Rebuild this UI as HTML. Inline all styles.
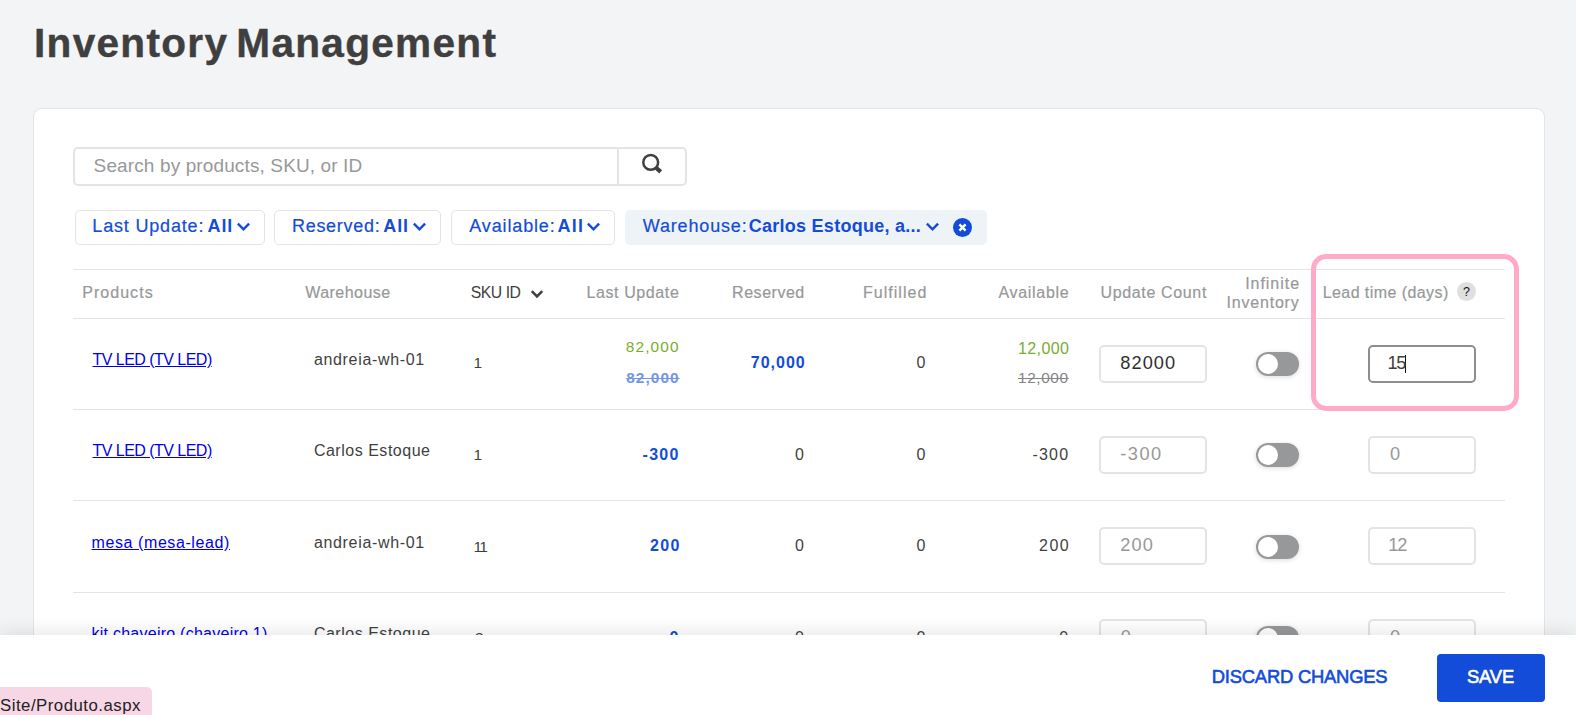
<!DOCTYPE html>
<html lang="en">
<head>
<meta charset="utf-8">
<title>Inventory Management</title>
<style>
*{box-sizing:border-box;margin:0;padding:0}
html,body{width:1576px;height:715px;overflow:hidden;background:#f2f4f5;font-family:"Liberation Sans",sans-serif;color:#3f3f40}
.abs,.t{position:absolute;white-space:nowrap}
.t{line-height:20px;font-size:16px;font-weight:400}
#card{position:absolute;left:33px;top:108px;width:1512px;height:640px;background:#fff;border:1px solid #e3e4e6;border-radius:9px}
.hl{position:absolute;height:1px;left:73px;width:1432px;background:#e3e4e6}
.box{position:absolute;border:2px solid #e3e4e6;border-radius:5px;background:#fff}
.fbtn{position:absolute;top:210px;height:35px;border:1px solid #e3e4e6;border-radius:5px;background:#fff}
.tog{position:absolute;width:43px;height:24px;border-radius:12px;background:#979899;box-shadow:0 1px 5px rgba(0,0,0,.15)}
.tog i{position:absolute;left:2px;top:2px;width:20px;height:20px;border-radius:50%;background:#fff}
.chev{position:absolute;fill:none;stroke:#134cd8;stroke-width:2.5;stroke-linecap:butt;stroke-linejoin:miter}
</style>
</head>
<body>
<div id="card"></div>

<!-- search -->
<div class="box" style="left:73px;top:147px;width:614px;height:39px"></div>
<div class="abs" style="left:617px;top:149px;width:2px;height:35px;background:#e3e4e6"></div>
<svg class="abs" style="left:638px;top:150px" width="28" height="28" viewBox="0 0 28 28" fill="none" stroke="#3f3f40"><circle cx="12.7" cy="12.4" r="7.400" stroke-width="2.500"/><path d="M18.100 17.700L22.700 21.900" stroke-width="4.200"/></svg>

<!-- filters -->
<div class="fbtn" style="left:75px;width:190px"></div>
<svg class="chev" style="left:236px;top:221px" width="15" height="12" viewBox="0 0 15 12"><path d="M1.900 2.700l5.600 5.600l5.600-5.600"/></svg>
<div class="fbtn" style="left:274px;width:167px"></div>
<svg class="chev" style="left:412px;top:221px" width="15" height="12" viewBox="0 0 15 12"><path d="M1.900 2.700l5.600 5.600l5.600-5.600"/></svg>
<div class="fbtn" style="left:451px;width:164px"></div>
<svg class="chev" style="left:586px;top:221px" width="15" height="12" viewBox="0 0 15 12"><path d="M1.900 2.700l5.600 5.600l5.600-5.600"/></svg>
<div class="abs" style="left:625px;top:210px;width:362px;height:35px;border-radius:5px;background:#eef3f8"></div>
<svg class="chev" style="left:925px;top:221px" width="15" height="12" viewBox="0 0 15 12"><path d="M1.900 2.700l5.600 5.600l5.600-5.600"/></svg>
<svg class="abs" style="left:952.500px;top:218px" width="19" height="19" viewBox="0 0 19 19"><circle cx="9.5" cy="9.5" r="9.5" fill="#134cd8"/><path d="M6.400 6.400l6.200 6.200M12.600 6.400l-6.200 6.200" stroke="#fff" stroke-width="2.400"/></svg>

<!-- table lines -->
<div class="hl" style="top:269px"></div>
<div class="hl" style="top:318px"></div>
<div class="hl" style="top:409px"></div>
<div class="hl" style="top:500px"></div>
<div class="hl" style="top:592px"></div>

<!-- header icons -->
<svg class="chev" style="left:530px;top:287.500px;stroke:#3f3f40;stroke-width:2.600;stroke-linecap:butt;stroke-linejoin:miter" width="14" height="12" viewBox="0 0 14 12"><path d="M1.800 3.200l5.200 5.200l5.200-5.200"/></svg>
<div class="abs" style="left:1457px;top:282px;width:19px;height:19px;border-radius:50%;background:#dfdfe0;color:#111;font-size:12.500px;font-weight:400;text-align:center;line-height:21px">?</div>

<div class="box" style="left:1099px;top:345px;width:108px;height:38px"></div>
<div class="tog" style="left:1256px;top:352px"><i></i></div>
<div class="box" style="left:1368px;top:345px;width:108px;height:38px;border-color:#8e8e8f"></div>
<div class="box" style="left:1099px;top:436px;width:108px;height:38px"></div>
<div class="tog" style="left:1256px;top:443px"><i></i></div>
<div class="box" style="left:1368px;top:436px;width:108px;height:38px"></div>
<div class="box" style="left:1099px;top:527.4px;width:108px;height:38px"></div>
<div class="tog" style="left:1256px;top:535px"><i></i></div>
<div class="box" style="left:1368px;top:527.4px;width:108px;height:38px"></div>
<div class="box" style="left:1099px;top:619.3px;width:108px;height:38px"></div>
<div class="tog" style="left:1256px;top:626px"><i></i></div>
<div class="box" style="left:1368px;top:619.3px;width:108px;height:38px"></div>
<div class="abs" style="left:1405px;top:354.5px;width:1px;height:18.5px;background:#111"></div>
<h1 class="t" style="left:34.00px;top:33.00px;font-size:40.6px;font-weight:700;color:#3f3f40;letter-spacing:1.289px;-webkit-text-stroke:0.4px #3f3f40;word-spacing:-4.500px">Inventory Management</h1>
<div class="t" style="left:93.60px;top:156.00px;font-size:19px;color:#979899;letter-spacing:0.124px">Search by products, SKU, or ID</div>
<div class="t" style="left:92.30px;top:216.00px;font-size:18px;color:#134cd8;letter-spacing:0.827px;-webkit-text-stroke:0.2px #134cd8">Last Update:</div>
<div class="t" style="left:207.50px;top:216.00px;font-size:18px;font-weight:700;color:#134cd8;letter-spacing:0.9px">All</div>
<div class="t" style="left:292.00px;top:216.00px;font-size:18px;color:#134cd8;letter-spacing:0.7px;-webkit-text-stroke:0.2px #134cd8">Reserved:</div>
<div class="t" style="left:383.20px;top:216.00px;font-size:18px;font-weight:700;color:#134cd8;letter-spacing:0.95px">All</div>
<div class="t" style="left:469.30px;top:216.00px;font-size:18px;color:#134cd8;letter-spacing:0.856px;-webkit-text-stroke:0.2px #134cd8">Available:</div>
<div class="t" style="left:557.50px;top:216.00px;font-size:18px;font-weight:700;color:#134cd8;letter-spacing:1.2px">All</div>
<div class="t" style="left:642.80px;top:216.00px;font-size:18px;color:#134cd8;letter-spacing:0.833px;-webkit-text-stroke:0.2px #134cd8">Warehouse:</div>
<div class="t" style="left:748.70px;top:216.00px;font-size:18px;font-weight:700;color:#134cd8;letter-spacing:0.268px">Carlos Estoque, a...</div>
<div class="t" style="left:82.20px;top:283.00px;font-size:16px;color:#979899;letter-spacing:1.043px;-webkit-text-stroke:0.2px #979899">Products</div>
<div class="t" style="left:305.20px;top:283.00px;font-size:16px;color:#979899;letter-spacing:0.475px;-webkit-text-stroke:0.2px #979899">Warehouse</div>
<div class="t" style="left:470.80px;top:283.00px;font-size:15.8px;color:#3f3f40;letter-spacing:-0.5px">SKU ID</div>
<div class="t" style="left:586.50px;top:283.00px;font-size:16px;color:#979899;letter-spacing:0.6px;-webkit-text-stroke:0.2px #979899">Last Update</div>
<div class="t" style="left:732.10px;top:283.00px;font-size:16px;color:#979899;letter-spacing:0.529px;-webkit-text-stroke:0.2px #979899">Reserved</div>
<div class="t" style="left:862.90px;top:283.00px;font-size:16px;color:#979899;letter-spacing:1.038px;-webkit-text-stroke:0.2px #979899">Fulfilled</div>
<div class="t" style="left:998.50px;top:283.00px;font-size:16px;color:#979899;letter-spacing:0.688px;-webkit-text-stroke:0.2px #979899">Available</div>
<div class="t" style="left:1100.50px;top:283.00px;font-size:16px;color:#979899;letter-spacing:0.645px;-webkit-text-stroke:0.2px #979899">Update Count</div>
<div class="t" style="left:1245.20px;top:274.00px;font-size:16px;color:#979899;letter-spacing:0.957px;-webkit-text-stroke:0.2px #979899">Infinite</div>
<div class="t" style="left:1226.50px;top:293.00px;font-size:16px;color:#979899;letter-spacing:0.8px;-webkit-text-stroke:0.2px #979899">Inventory</div>
<div class="t" style="left:1322.70px;top:283.00px;font-size:16px;color:#979899;letter-spacing:0.427px;-webkit-text-stroke:0.2px #979899">Lead time (days)</div>
<a class="t" style="left:92.50px;top:350.00px;font-size:16px;color:#0000ee;letter-spacing:-0.529px;text-decoration:underline" href="#">TV LED (TV LED)</a>
<div class="t" style="left:313.90px;top:350.00px;font-size:16px;color:#3f3f40;letter-spacing:0.675px">andreia-wh-01</div>
<div class="t" style="left:473.50px;top:353.00px;font-size:15.5px;color:#3f3f40">1</div>
<a class="t" style="left:92.50px;top:441.00px;font-size:16px;color:#0000ee;letter-spacing:-0.529px;text-decoration:underline" href="#">TV LED (TV LED)</a>
<div class="t" style="left:313.90px;top:441.00px;font-size:16px;color:#3f3f40;letter-spacing:0.515px">Carlos Estoque</div>
<div class="t" style="left:473.50px;top:445.00px;font-size:15.5px;color:#3f3f40">1</div>
<a class="t" style="left:91.50px;top:533.00px;font-size:16px;color:#0000ee;letter-spacing:0.593px;text-decoration:underline" href="#">mesa (mesa-lead)</a>
<div class="t" style="left:313.90px;top:533.00px;font-size:16px;color:#3f3f40;letter-spacing:0.675px">andreia-wh-01</div>
<div class="t" style="left:473.45px;top:537.00px;font-size:15.5px;color:#3f3f40;letter-spacing:-1.6px">11</div>
<a class="t" style="left:91.50px;top:624.00px;font-size:16px;color:#0000ee;letter-spacing:0.25px;text-decoration:underline" href="#">kit chaveiro (chaveiro 1)</a>
<div class="t" style="left:313.90px;top:624.00px;font-size:16px;color:#3f3f40;letter-spacing:0.515px">Carlos Estoque</div>
<div class="t" style="left:475.05px;top:628.00px;font-size:15.5px;color:#3f3f40">3</div>
<div class="t" style="left:625.70px;top:337.00px;font-size:15.4px;color:#78ad30;letter-spacing:1.16px">82,000</div>
<div class="t" style="left:626.20px;top:368.00px;font-size:15.4px;font-weight:700;color:#7395e6;letter-spacing:1.06px;text-decoration:line-through">82,000</div>
<div class="t" style="left:750.80px;top:353.00px;font-size:16px;font-weight:700;color:#134cd8;letter-spacing:1.0px">70,000</div>
<div class="t" style="left:916.40px;top:353.00px;font-size:16px;color:#3f3f40">0</div>
<div class="t" style="left:1018.00px;top:339.00px;font-size:16px;color:#78ad30;letter-spacing:0.4px">12,000</div>
<div class="t" style="left:1018.00px;top:368.00px;font-size:15.4px;color:#858586;letter-spacing:0.6px;text-decoration:line-through">12,000</div>
<div class="t" style="left:1120.30px;top:353.00px;font-size:18.2px;color:#2e2e30;letter-spacing:1.075px">82000</div>
<div class="t" style="left:1387.50px;top:353.00px;font-size:18.2px;color:#3f3f40;letter-spacing:-1.4px">15</div>
<div class="t" style="left:642.60px;top:445.00px;font-size:16px;font-weight:700;color:#134cd8;letter-spacing:1.233px">-300</div>
<div class="t" style="left:795.00px;top:445.00px;font-size:16px;color:#3f3f40">0</div>
<div class="t" style="left:916.40px;top:445.00px;font-size:16px;color:#3f3f40">0</div>
<div class="t" style="left:1032.50px;top:445.00px;font-size:16px;color:#3f3f40;letter-spacing:1.167px">-300</div>
<div class="t" style="left:1120.30px;top:444.00px;font-size:18.2px;color:#979899;letter-spacing:1.5px">-300</div>
<div class="t" style="left:1389.95px;top:444.00px;font-size:18.2px;color:#979899">0</div>
<div class="t" style="left:650.00px;top:536.00px;font-size:16px;font-weight:700;color:#134cd8;letter-spacing:1.4px">200</div>
<div class="t" style="left:795.00px;top:536.00px;font-size:16px;color:#3f3f40">0</div>
<div class="t" style="left:916.40px;top:536.00px;font-size:16px;color:#3f3f40">0</div>
<div class="t" style="left:1039.00px;top:536.00px;font-size:16px;color:#3f3f40;letter-spacing:1.5px">200</div>
<div class="t" style="left:1120.30px;top:535.00px;font-size:18.2px;color:#979899;letter-spacing:1.1px">200</div>
<div class="t" style="left:1388.35px;top:535.00px;font-size:18.2px;color:#979899;letter-spacing:-1.2px">12</div>
<div class="t" style="left:669.50px;top:628.00px;font-size:16px;font-weight:700;color:#134cd8">0</div>
<div class="t" style="left:795.00px;top:628.00px;font-size:16px;color:#3f3f40">0</div>
<div class="t" style="left:916.40px;top:628.00px;font-size:16px;color:#3f3f40">0</div>
<div class="t" style="left:1059.20px;top:628.00px;font-size:16px;color:#3f3f40">0</div>
<div class="t" style="left:1120.65px;top:627.00px;font-size:18.2px;color:#979899">0</div>
<div class="t" style="left:1389.95px;top:627.00px;font-size:18.2px;color:#979899">0</div>

<!-- highlight -->
<div class="abs" style="left:1311px;top:254px;width:208px;height:157px;border:5px solid #ffabc8;border-radius:15px"></div>

<!-- bottom bar -->
<div class="abs" style="left:0;top:635px;width:1576px;height:80px;background:#fff;box-shadow:0 -3px 18px rgba(0,0,0,.10)"></div>
<div class="abs" style="left:1437px;top:654px;width:108px;height:48px;border-radius:4px;background:#134cd8"></div>
<div class="abs" style="left:0;top:687px;width:152px;height:28px;background:#f7d7e5;border-top-right-radius:5px"></div>
<div class="t" style="left:1211.80px;top:667.00px;font-size:18.4px;color:#134cd8;letter-spacing:-0.221px;-webkit-text-stroke:0.6px #134cd8">DISCARD CHANGES</div>
<div class="t" style="left:1466.90px;top:667.00px;font-size:18.4px;color:#fff;letter-spacing:-0.1px;-webkit-text-stroke:0.6px #fff">SAVE</div>
<div class="t" style="left:0.00px;top:696.00px;font-size:16.8px;color:#202124;letter-spacing:0.5px">Site/Produto.aspx</div>
</body>
</html>
